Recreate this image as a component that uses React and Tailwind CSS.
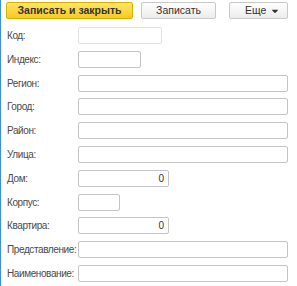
import { FaCaretDown } from 'react-icons/fa';

const fields = [
  { label: 'Код', width: 'w-[84px]', disabled: true },
  { label: 'Индекс', width: 'w-[63px]' },
  { label: 'Регион', width: 'w-[210px]' },
  { label: 'Город', width: 'w-[210px]' },
  { label: 'Район', width: 'w-[210px]' },
  { label: 'Улица', width: 'w-[210px]' },
  { label: 'Дом', width: 'w-[91px]', value: '0' },
  { label: 'Корпус', width: 'w-[42px]' },
  { label: 'Квартира', width: 'w-[91px]', value: '0' },
  { label: 'Представление', width: 'w-[210px]' },
  { label: 'Наименование', width: 'w-[210px]' },
];

export default function App() {
  return (
    <div className="w-[297px] h-[286px] bg-white border-l border-[#3d8ee0] overflow-hidden font-['Liberation_Sans',Arial,sans-serif] text-[10px] text-[#4a4a4a]">
      <div className="flex items-center pl-[5px] pt-[2px] text-[10.5px]">
        <button className="h-[17px] w-[127px] rounded-[2px] border border-[#d9b200] bg-gradient-to-b from-[#ffe463] to-[#f7c91b] font-bold text-[#333]">
          Записать и закрыть
        </button>
        <button className="ml-[8px] h-[17px] w-[75px] rounded-[2px] border border-[#c8c8c8] bg-gradient-to-b from-white to-[#ececec] text-[#333]">
          Записать
        </button>
        <button className="ml-[13px] h-[17px] w-[59px] rounded-[2px] border border-[#c8c8c8] bg-gradient-to-b from-white to-[#ececec] text-[#333] flex items-center justify-between pl-[15px] pr-[7px]">
          <span>Еще</span>
          <FaCaretDown size={10} className="text-[#333]" />
        </button>
      </div>
      <div className="mt-[8px] flex flex-col gap-[6.8px]">
        {fields.map((f) => (
          <div key={f.label} className="flex items-center h-[17px]">
            <span className="w-[77px] pl-[6px] shrink-0 whitespace-nowrap tracking-[-0.4px]">{f.label}:</span>
            <div
              className={`${f.width} h-[17px] rounded-[2px] border ${f.disabled ? 'border-[#e2e2e2]' : 'border-[#c4c4c4]'} bg-white flex items-center justify-end pr-[4px] text-[#333]`}
            >
              {f.value}
            </div>
          </div>
        ))}
      </div>
    </div>
  );
}
